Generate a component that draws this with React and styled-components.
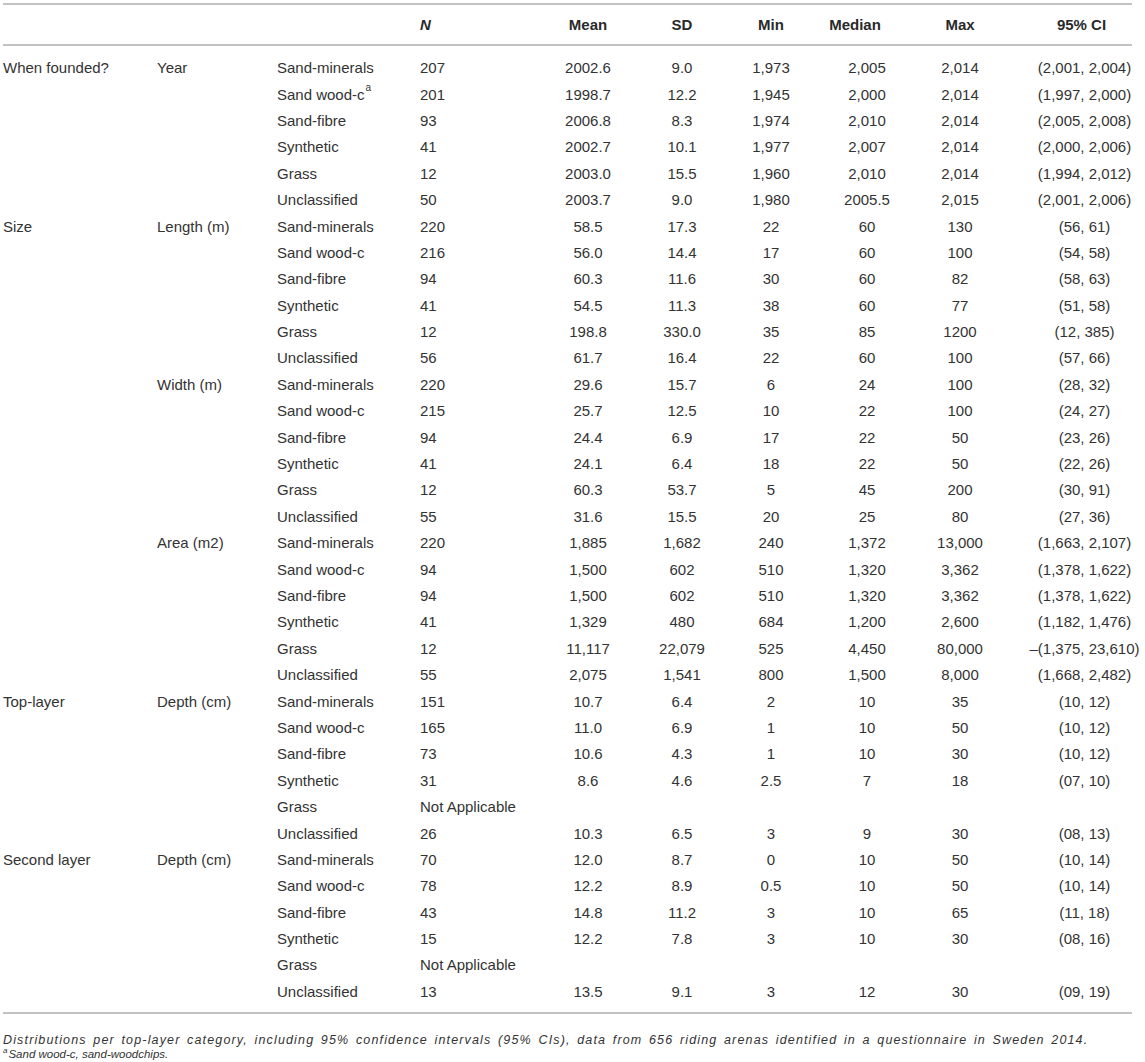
import React from "react";
import styled, { createGlobalStyle } from "styled-components";

const Global = createGlobalStyle`
  html, body { margin: 0; padding: 0; background: #ffffff; }
  body { font-family: "Liberation Sans", Arial, Helvetica, sans-serif; color: #333333; }
`;

const COLS = "154px 120px 143px 121px 94px 94px 84px 108px 78px 133px";

const Page = styled.div`
  padding: 3px 0 0 3px;
  width: 1129px;
`;

const TableBox = styled.div`
  border-top: 2px solid #c2c2c2;
  border-bottom: 2px solid #c2c2c2;
`;

const HeaderRow = styled.div`
  display: grid;
  grid-template-columns: ${COLS};
  height: 39px;
  border-bottom: 2px solid #c2c2c2;
  align-items: center;
`;

const HeadCell = styled.div`
  font-size: 15px;
  font-weight: bold;
  color: #2a2a2a;
  display: flex;
  justify-content: ${(p) => (p.$left ? "flex-start" : "center")};
  padding-left: ${(p) => p.$pl || 0}px;
  padding-right: ${(p) => p.$pr || 0}px;
  white-space: nowrap;
  font-style: ${(p) => (p.$italic ? "italic" : "normal")};
`;

const Body = styled.div`
  padding: 9px 0 7px;
`;

const Row = styled.div`
  display: grid;
  grid-template-columns: ${COLS};
  height: 26.4px;
  align-items: center;
`;

const Cell = styled.div`
  font-size: 15px;
  line-height: 18px;
  color: #333333;
  white-space: nowrap;
  display: flex;
  justify-content: ${(p) => (p.$left ? "flex-start" : "center")};
  padding-left: ${(p) => p.$pl || 0}px;
  min-width: 0;
`;

const Sup = styled.sup`
  font-size: 10px;
  line-height: 0;
  position: relative;
  top: 2px;
  margin-left: 1px;
`;

const Notes = styled.div`
  margin-top: 20px;
  font-style: italic;
  color: #333333;
  display: flex;
  flex-direction: column;
  gap: 1px;
`;

const NoteLine = styled.div`
  font-size: ${(p) => (p.$wide ? "12.5px" : "11.5px")};
  line-height: 13px;
  white-space: nowrap;
  letter-spacing: ${(p) => (p.$wide ? "1.15px" : "0")};
  word-spacing: ${(p) => (p.$wide ? "2px" : "0")};
`;

const NoteSup = styled.sup`
  font-size: 8px;
  line-height: 0;
  margin-right: 1px;
`;

const S = (
  <>
    Sand wood-c<Sup>a</Sup>
  </>
);

const groups = [
  {
    a: "When founded?",
    b: "Year",
    rows: [
      ["Sand-minerals", "207", "2002.6", "9.0", "1,973", "2,005", "2,014", "(2,001, 2,004)"],
      [S, "201", "1998.7", "12.2", "1,945", "2,000", "2,014", "(1,997, 2,000)"],
      ["Sand-fibre", "93", "2006.8", "8.3", "1,974", "2,010", "2,014", "(2,005, 2,008)"],
      ["Synthetic", "41", "2002.7", "10.1", "1,977", "2,007", "2,014", "(2,000, 2,006)"],
      ["Grass", "12", "2003.0", "15.5", "1,960", "2,010", "2,014", "(1,994, 2,012)"],
      ["Unclassified", "50", "2003.7", "9.0", "1,980", "2005.5", "2,015", "(2,001, 2,006)"],
    ],
  },
  {
    a: "Size",
    b: "Length (m)",
    rows: [
      ["Sand-minerals", "220", "58.5", "17.3", "22", "60", "130", "(56, 61)"],
      ["Sand wood-c", "216", "56.0", "14.4", "17", "60", "100", "(54, 58)"],
      ["Sand-fibre", "94", "60.3", "11.6", "30", "60", "82", "(58, 63)"],
      ["Synthetic", "41", "54.5", "11.3", "38", "60", "77", "(51, 58)"],
      ["Grass", "12", "198.8", "330.0", "35", "85", "1200", "(12, 385)"],
      ["Unclassified", "56", "61.7", "16.4", "22", "60", "100", "(57, 66)"],
    ],
  },
  {
    a: "",
    b: "Width (m)",
    rows: [
      ["Sand-minerals", "220", "29.6", "15.7", "6", "24", "100", "(28, 32)"],
      ["Sand wood-c", "215", "25.7", "12.5", "10", "22", "100", "(24, 27)"],
      ["Sand-fibre", "94", "24.4", "6.9", "17", "22", "50", "(23, 26)"],
      ["Synthetic", "41", "24.1", "6.4", "18", "22", "50", "(22, 26)"],
      ["Grass", "12", "60.3", "53.7", "5", "45", "200", "(30, 91)"],
      ["Unclassified", "55", "31.6", "15.5", "20", "25", "80", "(27, 36)"],
    ],
  },
  {
    a: "",
    b: "Area (m2)",
    rows: [
      ["Sand-minerals", "220", "1,885", "1,682", "240", "1,372", "13,000", "(1,663, 2,107)"],
      ["Sand wood-c", "94", "1,500", "602", "510", "1,320", "3,362", "(1,378, 1,622)"],
      ["Sand-fibre", "94", "1,500", "602", "510", "1,320", "3,362", "(1,378, 1,622)"],
      ["Synthetic", "41", "1,329", "480", "684", "1,200", "2,600", "(1,182, 1,476)"],
      ["Grass", "12", "11,117", "22,079", "525", "4,450", "80,000", "\u2013(1,375, 23,610)"],
      ["Unclassified", "55", "2,075", "1,541", "800", "1,500", "8,000", "(1,668, 2,482)"],
    ],
  },
  {
    a: "Top-layer",
    b: "Depth (cm)",
    rows: [
      ["Sand-minerals", "151", "10.7", "6.4", "2", "10", "35", "(10, 12)"],
      ["Sand wood-c", "165", "11.0", "6.9", "1", "10", "50", "(10, 12)"],
      ["Sand-fibre", "73", "10.6", "4.3", "1", "10", "30", "(10, 12)"],
      ["Synthetic", "31", "8.6", "4.6", "2.5", "7", "18", "(07, 10)"],
      ["Grass", "Not Applicable"],
      ["Unclassified", "26", "10.3", "6.5", "3", "9", "30", "(08, 13)"],
    ],
  },
  {
    a: "Second layer",
    b: "Depth (cm)",
    rows: [
      ["Sand-minerals", "70", "12.0", "8.7", "0", "10", "50", "(10, 14)"],
      ["Sand wood-c", "78", "12.2", "8.9", "0.5", "10", "50", "(10, 14)"],
      ["Sand-fibre", "43", "14.8", "11.2", "3", "10", "65", "(11, 18)"],
      ["Synthetic", "15", "12.2", "7.8", "3", "10", "30", "(08, 16)"],
      ["Grass", "Not Applicable"],
      ["Unclassified", "13", "13.5", "9.1", "3", "12", "30", "(09, 19)"],
    ],
  },
];

export default function App() {
  return (
    <Page>
      <Global />
      <TableBox>
        <HeaderRow>
          <HeadCell $left />
          <HeadCell $left />
          <HeadCell $left />
          <HeadCell $left $italic>N</HeadCell>
          <HeadCell>Mean</HeadCell>
          <HeadCell>SD</HeadCell>
          <HeadCell>Min</HeadCell>
          <HeadCell $pr={24}>Median</HeadCell>
          <HeadCell>Max</HeadCell>
          <HeadCell $pl={32}>95% CI</HeadCell>
        </HeaderRow>
        <Body>
          {groups.map((g, gi) =>
            g.rows.map((r, ri) => (
              <Row key={gi + "-" + ri}>
                <Cell $left>{ri === 0 ? g.a : ""}</Cell>
                <Cell $left>{ri === 0 ? g.b : ""}</Cell>
                <Cell $left>{r[0]}</Cell>
                <Cell $left>{r[1]}</Cell>
                <Cell>{r[2] || ""}</Cell>
                <Cell>{r[3] || ""}</Cell>
                <Cell>{r[4] || ""}</Cell>
                <Cell>{r[5] || ""}</Cell>
                <Cell>{r[6] || ""}</Cell>
                <Cell $pl={38}>{r[7] || ""}</Cell>
              </Row>
            ))
          )}
        </Body>
      </TableBox>
      <Notes>
        <NoteLine $wide>
          Distributions per top-layer category, including 95% confidence intervals (95% CIs), data from 656 riding arenas identified in a questionnaire in Sweden 2014.
        </NoteLine>
        <NoteLine>
          <NoteSup>a</NoteSup>Sand wood-c, sand-woodchips.
        </NoteLine>
      </Notes>
    </Page>
  );
}
